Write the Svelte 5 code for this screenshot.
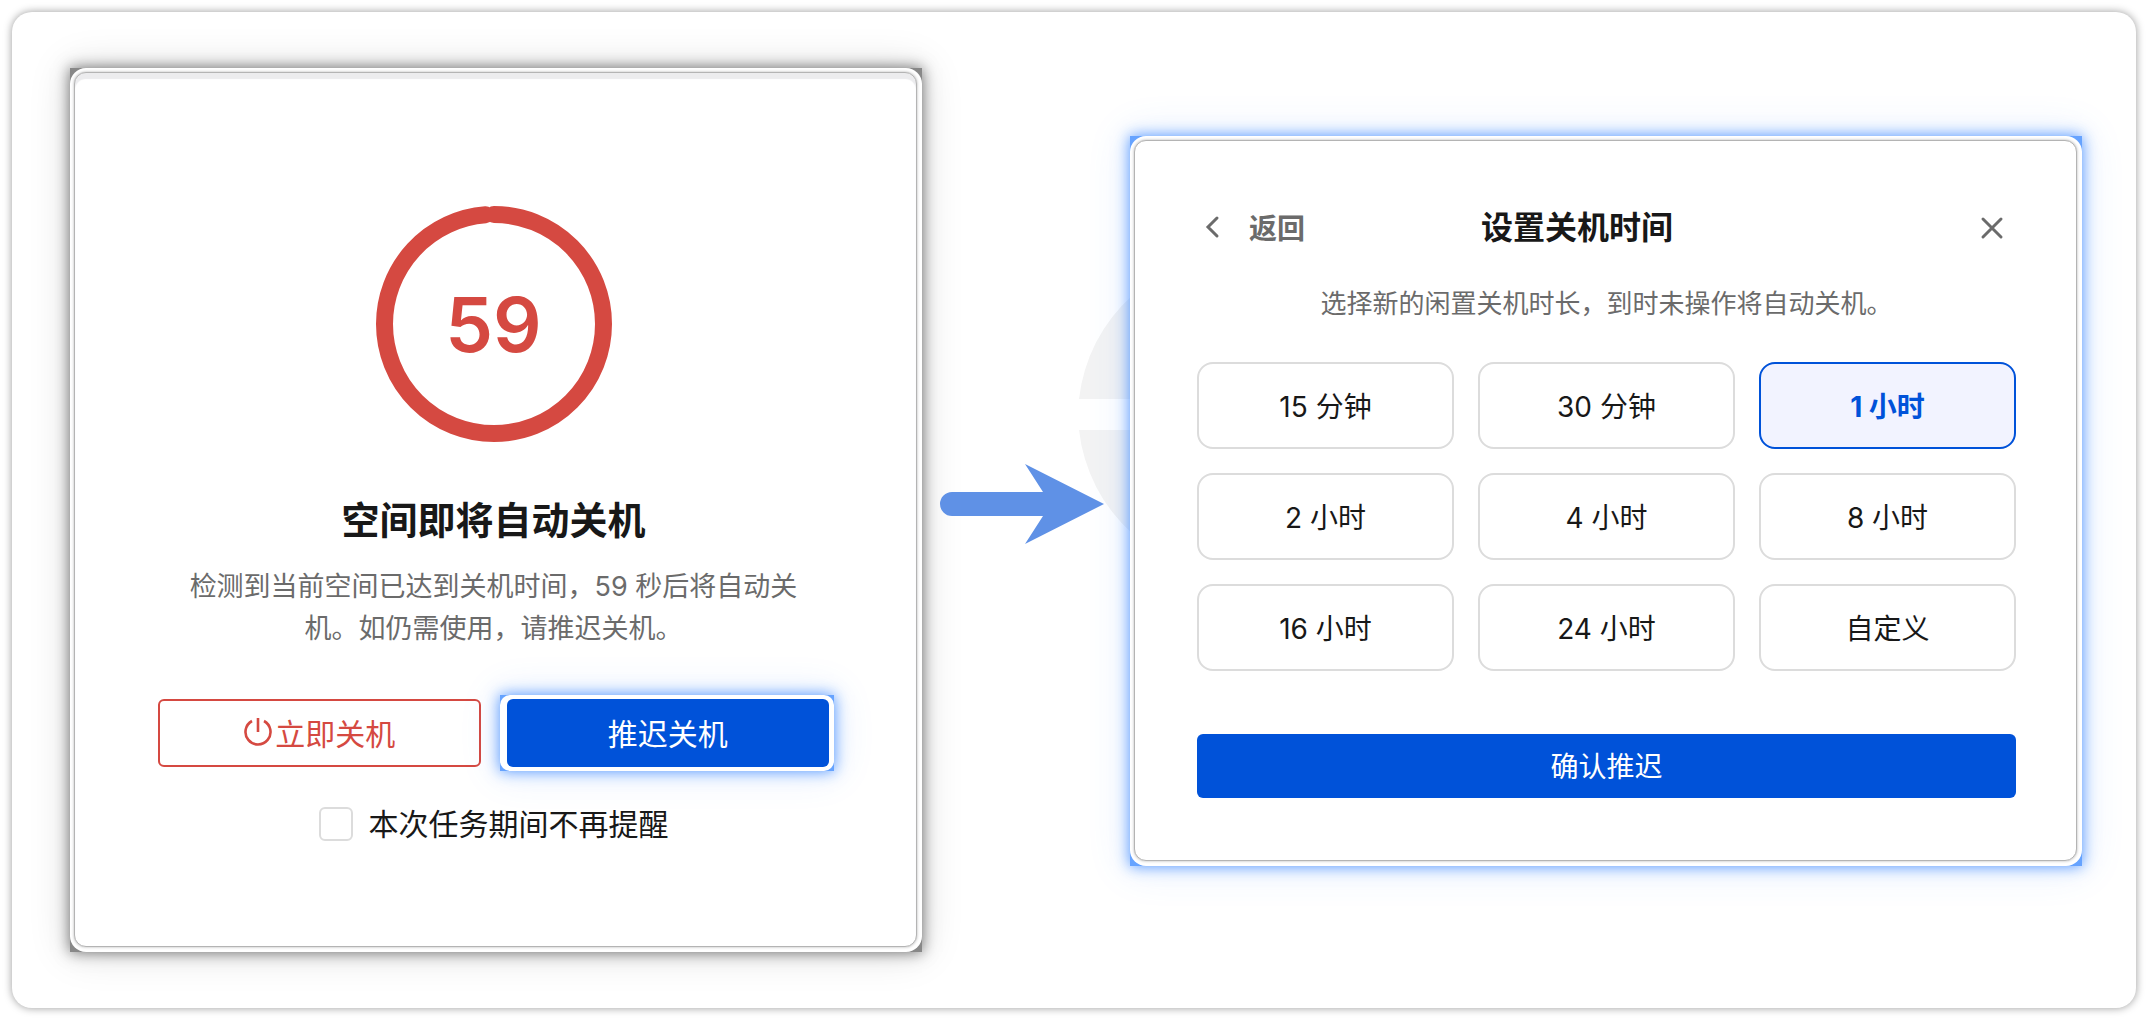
<script lang="ts">
    let seconds = 59;
    const total = 60;

    const options = ['15 分钟', '30 分钟', '1 小时', '2 小时', '4 小时', '8 小时', '16 小时', '24 小时', '自定义'];
    let selected = '1 小时';
    let muted = false;
</script>

<main class="board">
    <section class="shot gray">
        <div class="plate">
            <div class="dialog countdown">
                <div class="ring">
                    <svg viewBox="0 0 236 236" aria-hidden="true">
                        <circle cx="118" cy="118" r="109.5" pathLength={total} stroke-dasharray="{seconds + 0.25} {total}"/>
                    </svg>
                    <span class="seconds">{seconds}</span>
                </div>
                <h2>空间即将自动关机</h2>
                <p>检测到当前空间已达到关机时间，{seconds} 秒后将自动关机。如仍需使用，请推迟关机。</p>
                <div class="actions">
                    <button type="button" class="danger">
                        <svg class="power" viewBox="0 0 30 30" aria-hidden="true">
                            <path d="M15 1v14M9 4a12.5 12.5 0 1 0 12 0"/>
                        </svg>立即关机
                    </button>
                    <div class="shot blue halo">
                        <div class="plate">
                            <button type="button" class="primary">推迟关机</button>
                        </div>
                    </div>
                </div>
                <label class="mute">
                    <input type="checkbox" bind:checked={muted}>
                    本次任务期间不再提醒
                </label>
            </div>
        </div>
    </section>

    <svg class="arrow" viewBox="0 0 164 80" aria-hidden="true">
        <path d="M12 28H103L85 0L164 40L85 80L103 52H12A12 12 0 0 1 12 28Z"/>
    </svg>

    <section class="shot blue delay">
        <svg class="watermark" viewBox="0 0 326 326" aria-hidden="true">
            <path d="M1 148A163 163 0 0 1 325 148ZM1 179A163 163 0 0 0 325 179Z"/>
        </svg>
        <div class="plate">
            <div class="dialog picker">
                <header>
                    <button type="button" class="back">
                        <svg viewBox="0 0 24 24" aria-hidden="true"><path d="M16 3L7 12l9 9"/></svg>
                        返回
                    </button>
                    <h3>设置关机时间</h3>
                    <button type="button" class="close" aria-label="关闭">
                        <svg viewBox="0 0 24 24" aria-hidden="true"><path d="M3 3l18 18M21 3L3 21"/></svg>
                    </button>
                </header>
                <p>选择新的闲置关机时长，到时未操作将自动关机。</p>
                <div class="options">
                    {#each options as option}
                        <button
                                type="button"
                                class="option"
                                class:selected={option === selected}
                                aria-pressed={option === selected}
                                on:click={() => {selected = option;}}
                        >{option}</button>
                    {/each}
                </div>
                <button type="button" class="primary confirm">确认推迟</button>
            </div>
        </div>
    </section>
</main>

<style>
    :global(body) {
        background: #fff;
    }

    .board {
        display: flex;
        align-items: center;
        isolation: isolate;
        margin: 12px;
        padding: 56px 54px 56px 58px;
        border-radius: 20px;
        background: #fff;
        box-shadow: 0 0 8px rgba(0, 0, 0, 0.4);
        color: #181818;
        font-family: Inter, "Noto Sans CJK SC", sans-serif;
    }

    h2, h3, p {
        margin: 0;
    }

    button {
        box-sizing: border-box;
        margin: 0;
        padding: 0 0 2px;
        border: 0;
        background: none;
        color: inherit;
        font: inherit;
        cursor: pointer;
    }

    svg {
        fill: none;
        stroke: currentColor;
    }

    /* square backdrop whose corners show behind the rounded plate */
    .shot {
        position: relative;
        flex: 852 1 0;
        min-width: 0;
    }

    .gray {
        background: #888;
        box-shadow: 0 0 14px rgba(0, 0, 0, 0.56), 0 0 40px rgba(0, 0, 0, 0.14);
    }

    .blue {
        background: #66a3ff;
        box-shadow: 0 0 14px rgba(60, 136, 255, 0.9), 0 0 40px rgba(60, 136, 255, 0.16);
    }

    .plate {
        position: relative;
        padding: 4px 5px 5px 4px;
        border-radius: 16px;
        background: #fff;
    }

    .dialog {
        display: flex;
        flex-direction: column;
        border: 1px solid #b4b4b4;
        border-radius: 12px;
        background: #fff;
        box-shadow: 0 0 3px rgba(0, 0, 0, 0.3);
    }

    .countdown {
        align-items: center;
        padding: 133px 87px 105px 83px;
        box-shadow: 0 0 3px rgba(0, 0, 0, 0.3), inset 0 6px 1px #ececee;
    }

    .ring {
        display: grid;
        place-items: center;
        width: 236px;
        height: 236px;
        color: #d54941;
    }

    .ring svg, .seconds {
        grid-area: 1 / 1;
    }

    .ring svg {
        width: 236px;
        height: 236px;
        stroke-width: 17;
        stroke-linecap: round;
        transform: rotate(-90deg);
    }

    .seconds {
        font-size: 76px;
        font-weight: 600;
        line-height: 80px;
    }

    h2 {
        margin-top: 54px;
        font-size: 38px;
        font-weight: 700;
        line-height: 48px;
    }

    p {
        color: #6b6b6b;
        text-align: center;
    }

    .countdown p {
        margin-top: 22px;
        padding: 0 24px;
        font-size: 27px;
        line-height: 42px;
    }

    .actions {
        display: grid;
        grid-template-columns: 1fr 1fr;
        gap: 26px;
        align-self: stretch;
        margin-top: 49px;
        font-size: 30px;
    }

    .danger {
        display: flex;
        align-items: center;
        justify-content: center;
        gap: 2px;
        height: 68px;
        border: 2px solid #d54941;
        border-radius: 6px;
        color: #d54941;
    }

    .power {
        width: 30px;
        height: 30px;
        stroke-width: 2.6;
    }

    .halo {
        margin: -4px -5px -4px -7px;
    }

    .halo .plate {
        padding: 4px 5px 4px 7px;
        border-radius: 10px;
    }

    .primary {
        width: 100%;
        height: 68px;
        border-radius: 6px;
        background: #0052d9;
        color: #fff;
    }

    .mute {
        display: flex;
        align-items: center;
        gap: 16px;
        margin-top: 40px;
        font-size: 30px;
        line-height: 34px;
    }

    .mute input {
        appearance: none;
        box-sizing: border-box;
        width: 34px;
        height: 34px;
        margin: 0;
        border: 2px solid #dcdcdc;
        border-radius: 6px;
        background: #fff;
    }

    .mute input:checked {
        border-color: #0052d9;
        background: #0052d9;
    }

    .arrow {
        position: relative;
        z-index: 1;
        flex: none;
        width: 164px;
        height: 80px;
        margin: 0 26px 12px 18px;
        fill: #5f91e6;
        stroke: none;
    }

    .delay {
        flex-grow: 952;
        margin-bottom: 18px;
    }

    .watermark {
        position: absolute;
        z-index: -1;
        top: 115px;
        left: -52px;
        width: 326px;
        height: 326px;
        fill: #f3f3f3;
        stroke: none;
    }

    .picker {
        padding: 57px 60px 62px 62px;
    }

    header {
        display: grid;
        grid-template-columns: 284px auto 1fr;
        align-items: center;
        height: 60px;
    }

    header svg {
        width: 24px;
        height: 24px;
        stroke-width: 3;
        stroke-linecap: round;
    }

    .back {
        display: flex;
        align-items: center;
        gap: 24px;
        padding-left: 4px;
        color: #6b6b6b;
        font-size: 28px;
        font-weight: 700;
    }

    .close {
        display: flex;
        justify-self: end;
        padding: 12px;
        color: #6b6b6b;
    }

    h3 {
        font-size: 32px;
        font-weight: 700;
        line-height: 40px;
    }

    .picker p {
        margin-top: 26px;
        font-size: 26px;
        line-height: 40px;
    }

    .options {
        display: grid;
        grid-template-columns: repeat(3, 1fr);
        gap: 24px;
        margin-top: 38px;
    }

    .option {
        height: 87px;
        border: 2px solid #dcdcdc;
        border-radius: 16px;
        font-size: 28px;
    }

    .option.selected {
        border-color: #0052d9;
        background: #f2f3ff;
        color: #0052d9;
        font-weight: 700;
    }

    .confirm {
        height: 64px;
        margin-top: 63px;
        font-size: 28px;
    }
</style>
